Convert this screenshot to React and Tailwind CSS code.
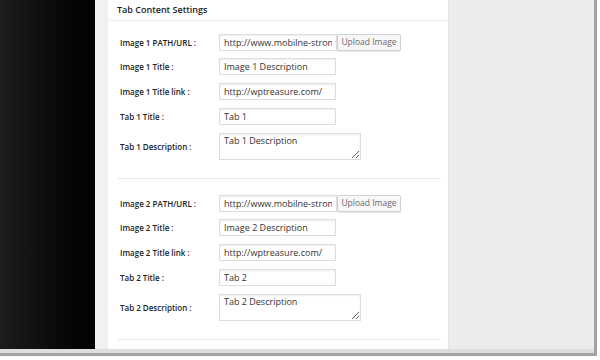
import React from 'react'

const font = { fontFamily: '"Open Sans", "Liberation Sans", sans-serif' }

function Label({ children }) {
  return <div className="w-[99px] shrink-0 text-[8px] font-semibold text-[#222]">{children}</div>
}

function TextInput({ value, width = 'w-[117px]' }) {
  return (
    <input
      readOnly
      value={value}
      className={`${width} h-[17px] border border-[#dddddd] bg-white px-[4px] text-[9px] text-[#333] shadow-[inset_0_1px_2px_rgba(0,0,0,0.07)] outline-none`}
      style={font}
    />
  )
}

function Row({ label, children, className = '' }) {
  return (
    <div className={`flex items-center ${className}`}>
      <Label>{label}</Label>
      {children}
    </div>
  )
}

function Block({ n }) {
  return (
    <>
      <Row label={`Image ${n} PATH/URL :`}>
        <TextInput value="http://www.mobilne-strony.pl/images/slide.jpg" width="w-[118px]" />
        <button className="h-[17px] w-[64px] rounded-[2px] border border-[#d0d0d0] bg-[#f7f7f7] text-[8.5px] text-[#6a6a6a] shadow-[0_1px_0_#e8e8e8]" style={font}>
          Upload Image
        </button>
      </Row>
      <Row label={`Image ${n} Title :`} className="mt-[7px]">
        <TextInput value={`Image ${n} Description`} />
      </Row>
      <Row label={`Image ${n} Title link :`} className="mt-[8px]">
        <TextInput value="http://wptreasure.com/" />
      </Row>
      <Row label={`Tab ${n} Title :`} className="mt-[8px]">
        <TextInput value={`Tab ${n}`} />
      </Row>
      <Row label={`Tab ${n} Description :`} className="mt-[8px]">
        <textarea
          readOnly
          value={`Tab ${n} Description`}
          className="h-[27px] w-[142px] border border-[#dddddd] bg-white px-[4px] pt-[1px] text-[9px] leading-[12px] text-[#333] shadow-[inset_0_1px_2px_rgba(0,0,0,0.07)] outline-none"
          style={font}
        />
      </Row>
      <div className="mt-[18px] mr-[7px] -ml-[2px] h-px bg-[#e6e6e6]" />
    </>
  )
}

export default function App() {
  return (
    <div className="h-[360px] w-[600px] overflow-hidden bg-white" style={font}>
      <div className="h-[356px] w-[597px] border-r-[3px] border-b-[3px] border-[#a3a3a3] flex flex-col">
        <div className="flex h-[349px]">
          <div className="w-[95px] bg-gradient-to-r from-[#1d1d1d] to-[#020202]" />
          <div className="w-[13px] bg-[#f1f1f1]" />
          <div className="w-[340px] bg-white flex flex-col">
            <div className="h-[21px] flex items-center pl-[9px] text-[9px] font-semibold text-[#222] border-b border-[#eeeeee]">
              Tab Content Settings
            </div>
            <div className="flex flex-col pl-[12px] pt-[13px]">
              <Block n={1} />
              <div className="mt-[16px]" />
              <Block n={2} />
            </div>
          </div>
          <div className="flex-1 bg-[#ececec] border-l border-[#e4e4e4]" />
        </div>
        <div className="flex-1 bg-[#dedede]" />
      </div>
    </div>
  )
}
